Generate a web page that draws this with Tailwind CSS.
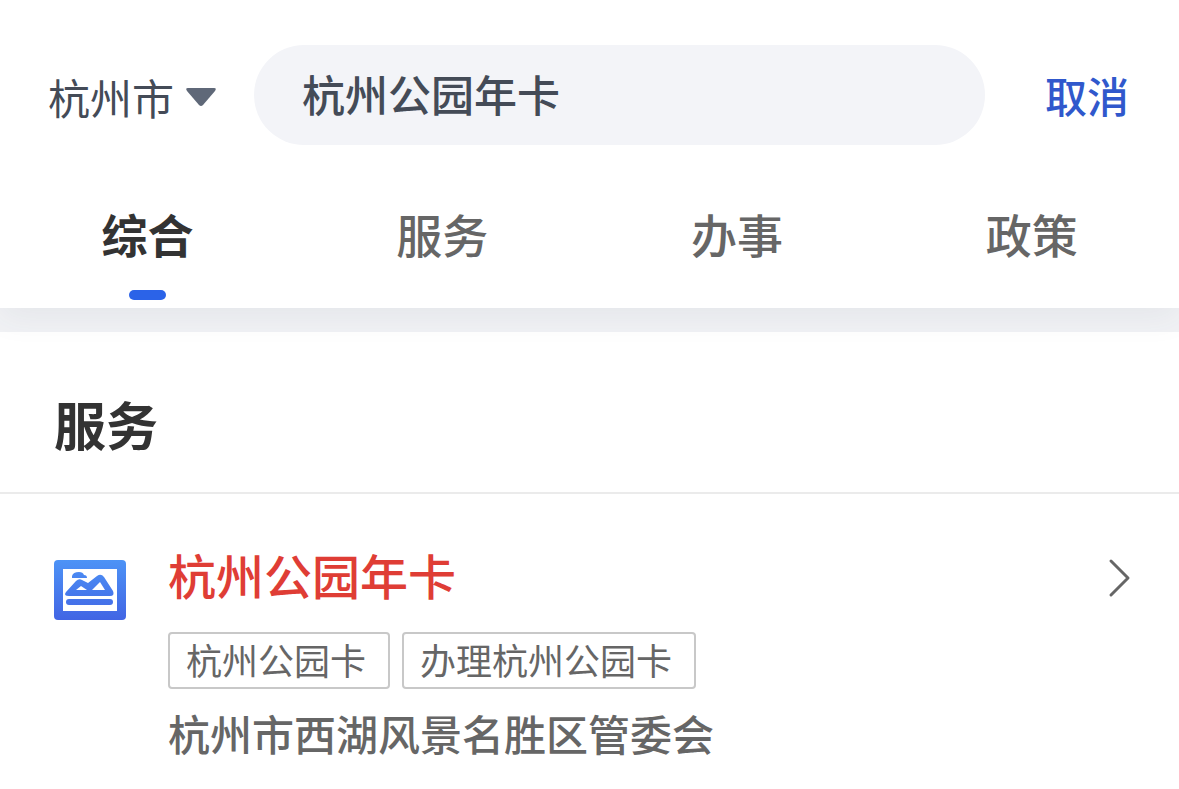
<!DOCTYPE html>
<html lang="zh-CN">
<head>
<meta charset="utf-8">
<meta name="viewport" content="width=device-width, initial-scale=1">
<title>杭州公园年卡</title>
<script src="https://cdn.jsdelivr.net/npm/@tailwindcss/browser@4"></script>
</head>
<body class="min-h-screen bg-white font-['Noto_Sans_CJK_SC',sans-serif] text-[#333333]">
<header class="relative bg-white shadow-[0_8px_32px_rgba(60,70,90,0.07)]">
  <form class="flex items-center pt-[45px] pr-[50px] pl-12">
    <button type="button" class="flex shrink-0 items-center gap-3 pt-1 text-[42px] leading-[60px] text-[#444b57]">
      <span>杭州市</span>
      <svg class="h-5 w-[30px]" viewBox="1 -1 30 20" fill="#5f6878" aria-hidden="true"><path d="M3 0h26q3 0 1 3L18 17q-2 2-4 0L2 3Q0 0 3 0z"/></svg>
    </button>
    <input type="text" aria-label="搜索" value="杭州公园年卡" class="ml-[38px] h-[100px] min-w-0 flex-1 rounded-full bg-[#f3f4f8] px-12 pb-1 text-[43px] font-medium text-[#444b57] outline-none">
    <button type="button" class="ml-[60px] shrink-0 text-[42px] leading-[60px] font-medium text-[#3058cc]">取消</button>
  </form>
  <nav class="grid grid-cols-4 pt-[52px] pb-2 text-[46px] leading-[72px] text-[#666666]">
    <a href="#all" aria-current="page" class="flex flex-col items-center gap-[21px] font-bold text-[#333333]">综合<span class="h-[10px] w-[37px] rounded-full bg-[#2b63e8]"></span></a>
    <a href="#service" class="text-center font-medium">服务</a>
    <a href="#affairs" class="text-center font-medium">办事</a>
    <a href="#policy" class="text-center font-medium">政策</a>
  </nav>
</header>
<main class="border-t-[24px] border-[#f1f2f5]">
  <h1 class="border-b-2 border-[#ebebeb] px-[54px] pt-[52px] pb-7 text-[52px] leading-20 font-bold">服务</h1>
  <a href="#card" class="flex items-start pt-11 pr-12 pb-6 pl-[54px]">
    <svg class="mt-[22px] h-[60px] w-[72px] shrink-0" viewBox="0 0 72 60" aria-hidden="true">
      <defs><linearGradient id="blue" gradientUnits="userSpaceOnUse" x1="0" y1="0" x2="0" y2="60"><stop offset="0" stop-color="#4d93f6"/><stop offset="1" stop-color="#4265e4"/></linearGradient></defs>
      <rect width="72" height="60" rx="4" fill="url(#blue)"/>
      <path d="M9 9h54v42H9z" fill="#fff"/>
      <path d="M18 18v-2q1-4 7-4 4 0 5 3 3 0 3 3z" fill="url(#blue)"/>
      <path fill-rule="evenodd" d="M12 32 22 21q3-3 6-1l6 3 9-7q4-3 7 1l9 14q2 5-3 5H15q-6 0-3-4zM22 30h11l-6-4zM38 30h13l-5-8z" fill="url(#blue)"/>
      <rect x="12" y="39" width="47" height="6" rx="3" fill="url(#blue)"/>
    </svg>
    <div class="ml-[42px] min-w-0 flex-1">
      <h2 class="text-[48px] leading-[72px] font-medium text-[#df3d35]">杭州公园年卡</h2>
      <ul class="mt-[22px] flex gap-3 text-[36px] leading-[50px] text-[#666666]">
        <li class="rounded-sm border-2 border-[#c8c8c8] pr-[22px] pb-[3px] pl-4">杭州公园卡</li>
        <li class="rounded-sm border-2 border-[#c8c8c8] pr-[22px] pb-[3px] pl-4">办理杭州公园卡</li>
      </ul>
      <p class="mt-[14px] text-[42px] leading-[60px] font-medium text-[#666666]">杭州市西湖风景名胜区管委会</p>
    </div>
    <svg class="mt-5 h-10 w-6 shrink-0" viewBox="0 0 24 40" fill="none" stroke="#666" stroke-width="3" stroke-linecap="round" stroke-linejoin="round" aria-hidden="true"><path d="M4 3 21 20 4 37"/></svg>
  </a>
</main>
</body>
</html>
